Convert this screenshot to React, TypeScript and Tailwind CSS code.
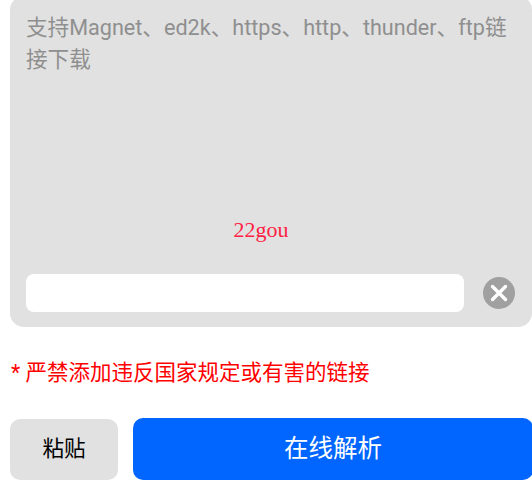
export default function App() {
  return (
    <div className="h-[498px] w-[532px] overflow-hidden bg-white pl-[10px] font-['Roboto','Noto_Sans_CJK_SC',sans-serif]">
      <div className="-mt-[4px] flex h-[331px] flex-col rounded-[14px] bg-[#e1e1e1] pl-[16px] pr-[17px]">
        <p className="mt-[16px] h-[206px] text-[21.6px] leading-[32px] text-[#8f8f8f]">
          支持Magnet、ed2k、https、http、thunder、ftp链接下载
        </p>
        <div className="h-[56px] pr-[19px] text-center font-['Liberation_Serif',serif] text-[22px] leading-[24px] text-[#ff2244]">
          22gou
        </div>
        <div className="flex items-center">
          <div className="h-[38px] w-[438px] shrink-0 rounded-[8px] bg-white" />
          <div className="ml-[19px] flex h-[32px] w-[32px] shrink-0 items-center justify-center rounded-full bg-[#a0a0a0]">
            <svg width="20" height="20" viewBox="0 0 20 20">
              <path d="M3.5 3.5L16.5 16.5M16.5 3.5L3.5 16.5" stroke="white" strokeWidth="3.4" strokeLinecap="round" />
            </svg>
          </div>
        </div>
      </div>
      <p className="mt-[31px] pl-px text-[21.5px] leading-[30px] text-[#ff0000]">* 严禁添加违反国家规定或有害的链接</p>
      <div className="mt-[30px] flex items-start">
        <button className="mt-px h-[61px] w-[108px] shrink-0 rounded-[10px] bg-[#e1e1e1] text-[21.6px] text-black">粘贴</button>
        <button className="ml-[15px] h-[62px] w-[400px] shrink-0 rounded-[10px] bg-[#0066ff] text-[24.5px] text-white">
          在线解析
        </button>
      </div>
    </div>
  );
}
